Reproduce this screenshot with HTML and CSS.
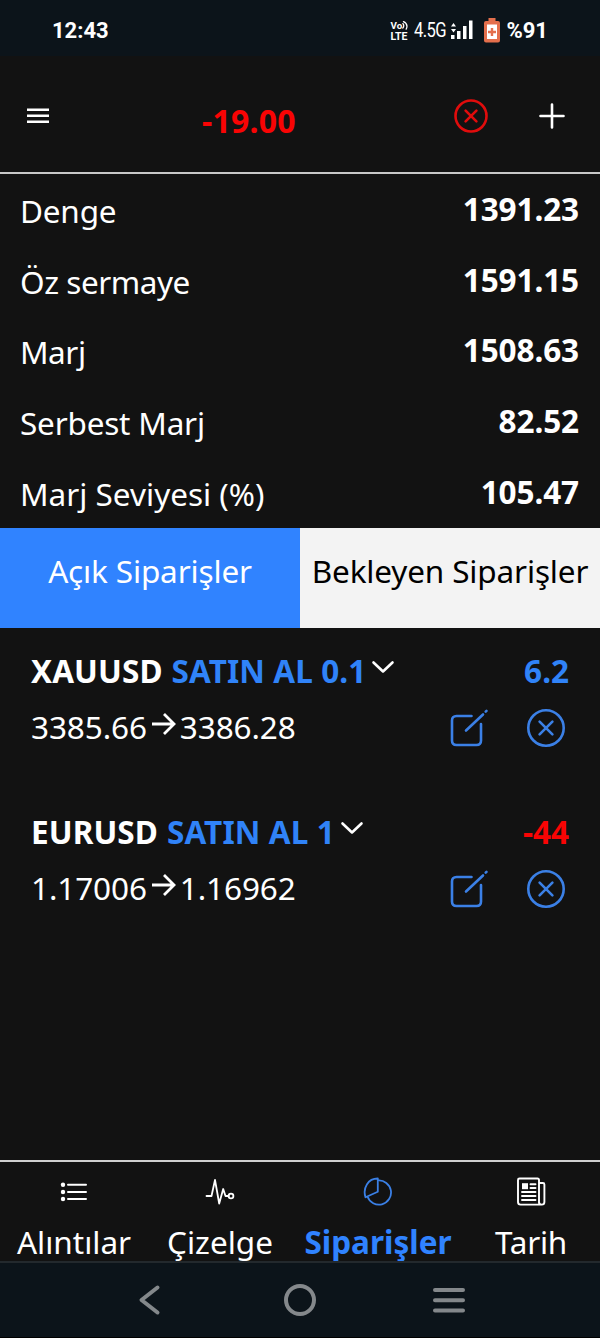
FILE: index.html
```html
<!DOCTYPE html>
<html lang="tr">
<head>
<meta charset="utf-8">
<title>Siparişler</title>
<link rel="stylesheet" href="styles.css">
</head>
<body>
<div class="statusbar">
  <span class="clock">12:43</span>
  <div class="indicators">
    <div class="volte"><span class="vo">Vo<svg width="7" height="9" viewBox="0 0 7 9"><path d="M.8 2.600a3 3 0 0 1 0 4.400M1.500 .6a5.500 5.500 0 0 1 3.500 4.500q0 1.700-.8 3" /></svg></span><span class="lte">LTE</span></div>
    <span class="network">4.5G</span>
    <svg class="signal" width="22" height="20" viewBox="0 0 22 20"><path d="M0 6.500l2.500-3.500 2.500 3.500zM0 9l2.500 3.500L5 9zM0 15h3.500v4H0zM6 11h3.500v8H6zM12 6h3.500v13H12zM18 .5h3.500V19H18z"/></svg>
    <svg class="battery" width="16" height="25" viewBox="0 0 16 25"><path fill="#e46f4c" d="M4.500 0h7v3H14q2 0 2 2v17.500q0 2-2 2H2q-2 0-2-2V5q0-2 2-2h2.500z"/><path fill="#fff" d="M3 6.500h10v14.500H3z"/><path fill="#e46f4c" d="M6.800 10h2.400v2.800H12v2.400H9.200V18H6.800v-2.800H4v-2.400h2.800z"/></svg>
    <span class="percent">%91</span>
  </div>
</div>

<header class="topbar">
  <svg class="menu" width="22" height="16" viewBox="0 0 22 16"><path d="M0 1.700h22M0 7.700h22M0 13.700h22"/></svg>
  <span class="total">-19.00</span>
  <svg class="close-all" width="34" height="34" viewBox="0 0 34 34"><circle cx="17" cy="17" r="15.500"/><path d="M11.600 11.600l10.800 10.800M22.400 11.600L11.600 22.400"/></svg>
  <svg class="add" width="26" height="26" viewBox="0 0 26 26"><path d="M13 1.500v23M1.500 13h23"/></svg>
</header>

<section class="summary">
  <div class="row"><span class="label snug">Denge</span><span class="value">1391.23</span></div>
  <div class="row"><span class="label tight">Öz sermaye</span><span class="value">1591.15</span></div>
  <div class="row"><span class="label tight">Marj</span><span class="value">1508.63</span></div>
  <div class="row"><span class="label snug">Serbest Marj</span><span class="value">82.52</span></div>
  <div class="row"><span class="label">Marj Seviyesi (%)</span><span class="value">105.47</span></div>
</section>

<div class="tabs">
  <div class="tab active">Açık Siparişler</div>
  <div class="tab">Bekleyen Siparişler</div>
</div>

<main class="orders">
  <article class="order">
    <div class="title"><span class="symbol">XAUUSD</span><span class="side">SATIN AL 0.1</span><svg class="chevron" width="24" height="15" viewBox="0 0 24 15"><path d="M2.500 2.500L12 11.500l9.500-9"/></svg><span class="profit">6.2</span></div>
    <div class="detail"><span class="price">3385.66</span><svg class="arrow" width="26" height="24" viewBox="0 0 26 24"><path d="M1 12h22M13 2l10 10-10 10"/></svg><span class="price">3386.28</span>
      <svg class="action edit" width="40" height="40" viewBox="0 0 40 40"><path d="M22.500 8H7.500Q3 8 3 12.500v20Q3 37 7.500 37h20q4.500 0 4.500-4.500V16M17 22.500L34 6.500M36.700 3.700l.8-.8"/></svg>
      <svg class="action close" width="40" height="40" viewBox="0 0 40 40"><circle cx="20" cy="20" r="17.700"/><path d="M13.600 13.600l12.800 12.800M26.400 13.600L13.600 26.400"/></svg></div>
  </article>
  <article class="order">
    <div class="title"><span class="symbol">EURUSD</span><span class="side">SATIN AL 1</span><svg class="chevron" width="24" height="15" viewBox="0 0 24 15"><path d="M2.500 2.500L12 11.500l9.500-9"/></svg><span class="profit loss">-44</span></div>
    <div class="detail"><span class="price">1.17006</span><svg class="arrow" width="26" height="24" viewBox="0 0 26 24"><path d="M1 12h22M13 2l10 10-10 10"/></svg><span class="price">1.16962</span>
      <svg class="action edit" width="40" height="40" viewBox="0 0 40 40"><path d="M22.500 8H7.500Q3 8 3 12.500v20Q3 37 7.500 37h20q4.500 0 4.500-4.500V16M17 22.500L34 6.500M36.700 3.700l.8-.8"/></svg>
      <svg class="action close" width="40" height="40" viewBox="0 0 40 40"><circle cx="20" cy="20" r="17.700"/><path d="M13.600 13.600l12.800 12.800M26.400 13.600L13.600 26.400"/></svg></div>
  </article>
</main>

<nav class="bottomnav">
  <div class="item"><svg width="30" height="30" viewBox="0 0 30 30"><path class="lines" d="M9 7.700h18M9 15h18M9 22h18"/><g class="solid"><circle cx="4" cy="7.700" r="2.200"/><circle cx="4" cy="15" r="2.200"/><circle cx="4" cy="22" r="2.200"/></g></svg><span>Alıntılar</span></div>
  <div class="item"><svg width="30" height="30" viewBox="0 0 30 30"><path d="M1.500 19h5L10 3l4.200 23.500 4-14.500 2.300 7h3.200"/><circle cx="26" cy="19" r="2.400"/></svg><span>Çizelge</span></div>
  <div class="item current"><svg width="30" height="30" viewBox="0 0 30 30"><path d="M14.800 1.500v13.300L2.500 20.300C-.5 11 5 1.500 14.800 1.500zM14.800 3.500A12.100 12.100 0 1 1 4.500 19.500"/></svg><span>Siparişler</span></div>
  <div class="item"><svg width="30" height="30" viewBox="0 0 30 30"><path class="paper" d="M23 26V3q0-1.500-1.500-1.500H3.500Q2 1.500 2 3v22q0 2.600 2.600 2.600h21.200q2.600 0 2.600-2.600V7.500q0-1.500-1.500-1.500H23v19q0 2.600 2.800 2.600M14.500 7.200h5M14.500 11h5M6 15h13.500M6 19h13.500M6 23h13.500"/><path class="solid" d="M6 6.200h6v6H6z"/></svg><span class="loose">Tarih</span></div>
</nav>

<footer class="sysnav">
  <svg width="24" height="34" viewBox="0 0 24 34"><path d="M19.500 4.500L3.500 17l16 12.500"/></svg>
  <svg class="home" width="34" height="34" viewBox="0 0 34 34"><circle cx="17" cy="17" r="14"/></svg>
  <svg width="34" height="34" viewBox="0 0 34 34"><path d="M3 7h28M3 17.200h28M3 27.500h28"/></svg>
</footer>
</body>
</html>
```
FILE: styles.css
```css
* { box-sizing: border-box; }
body {
  margin: 0;
  width: 600px;
  height: 1338px;
  display: flex;
  flex-direction: column;
  overflow: hidden;
  background: #121212;
  color: #fff;
  font: 31.5px/44px "Noto Sans", sans-serif;
}
svg { display: block; flex: none; fill: none; stroke-linecap: round; stroke-linejoin: round; }
span { white-space: nowrap; }

.statusbar {
  height: 56px;
  flex: none;
  padding: 6px 52px 0 52px;
  background: #0c141a;
  display: flex;
  align-items: center;
  justify-content: space-between;
  font: bold 22px/28px Roboto, sans-serif;
}
.indicators { display: flex; align-items: center; }
.volte { width: 19px; display: flex; flex-direction: column; font: bold 10.5px/11px Roboto, sans-serif; }
.vo { display: flex; font-size: 9.8px; }
.vo svg { stroke: #fff; stroke-width: 1.300; margin-top: 1px; }
.network {
  width: 31px;
  margin: 0 0 2px 5px;
  font-size: 20px;
  font-weight: 400;
  letter-spacing: -0.7px;
  transform: scaleX(0.83);
  transform-origin: left;
}
.signal { margin: 0 0 2px 6px; fill: #fff; }
.battery { margin: 0 0 2px 11px; }
.percent { margin-left: 6px; }

.topbar {
  height: 118px;
  flex: none;
  border-bottom: 2px solid #c8c8c8;
  padding: 4px 35px 0 27px;
  display: flex;
  align-items: center;
}
.topbar svg { stroke: #fff; stroke-width: 2.600; }
.topbar .menu { stroke-linecap: butt; }
.total { margin: 10px auto 0 153px; color: #f90404; font-weight: 700; font-size: 32px; letter-spacing: 0.2px; }
.topbar .close-all { stroke: #e00c0c; }
.topbar .add { margin-left: 51px; }

.summary { flex: none; padding: 0 21px 0 20px; }
.row { height: 70.800px; display: flex; align-items: center; justify-content: space-between; }
.label { padding-top: 3px; }
.snug { letter-spacing: -0.2px; }
.tight { letter-spacing: -0.45px; }
.value { font-weight: 700; padding-bottom: 1px; letter-spacing: -0.1px; }

.tabs { height: 100px; flex: none; display: grid; grid-template-columns: 1fr 1fr; }
.tab { padding-top: 21px; text-align: center; letter-spacing: -0.15px; background: #f3f3f3; color: #000; }
.tab.active { background: #3083ff; color: #fff; }

.orders { flex: 1; padding: 22px 31px 0 31px; }
.order { height: 161px; }
.title, .detail { display: flex; align-items: center; }
.title { height: 44px; font-weight: 700; }
.title span, .detail span { margin-bottom: 2px; }
.detail { height: 44px; margin-top: 12px; }
.symbol, .side { letter-spacing: 0.1px; }
.side { margin-left: 9px; color: #3083f8; }
.chevron { margin: 0 0 9px 5px; stroke: #fff; stroke-width: 2.600; }
.profit { margin-left: auto; color: #3083f8; }
.profit.loss { color: #f90404; }
.price { letter-spacing: -0.1px; }
.arrow { margin: 0 3px 8px 4px; stroke: #fff; stroke-width: 2.800; stroke-linejoin: miter; stroke-linecap: butt; }
.action { stroke: #3b80e6; stroke-width: 2.600; }
.edit { margin-left: auto; }
.close { margin: 0 3px 0 37px; }

.bottomnav {
  height: 101px;
  flex: none;
  border-top: 2px solid #d0d0d0;
  display: grid;
  grid-template-columns: 148px 144px 172px 134px;
}
.item { display: flex; flex-direction: column; align-items: center; padding-top: 15px; }
.item svg { stroke: #fff; stroke-width: 1.800; }
.item .lines { stroke-width: 2; }
.item .paper { stroke-width: 1.900; }
.item .solid { fill: #fff; stroke: none; }
.item span { margin-top: 13px; }
.item .loose { letter-spacing: -0.3px; }
.current { color: #3083ff; font-weight: 700; }
.item.current svg { stroke: #3b80e6; }

.sysnav {
  height: 77px;
  flex: none;
  border-top: 2px solid #23292d;
  border-bottom: 1px solid #000;
  background: #0c141a;
  padding: 0 134px 1px 138px;
  display: flex;
  align-items: center;
}
.sysnav svg { stroke: #84888b; stroke-width: 4; }
.home { margin: 0 auto 0 121px; }
```
